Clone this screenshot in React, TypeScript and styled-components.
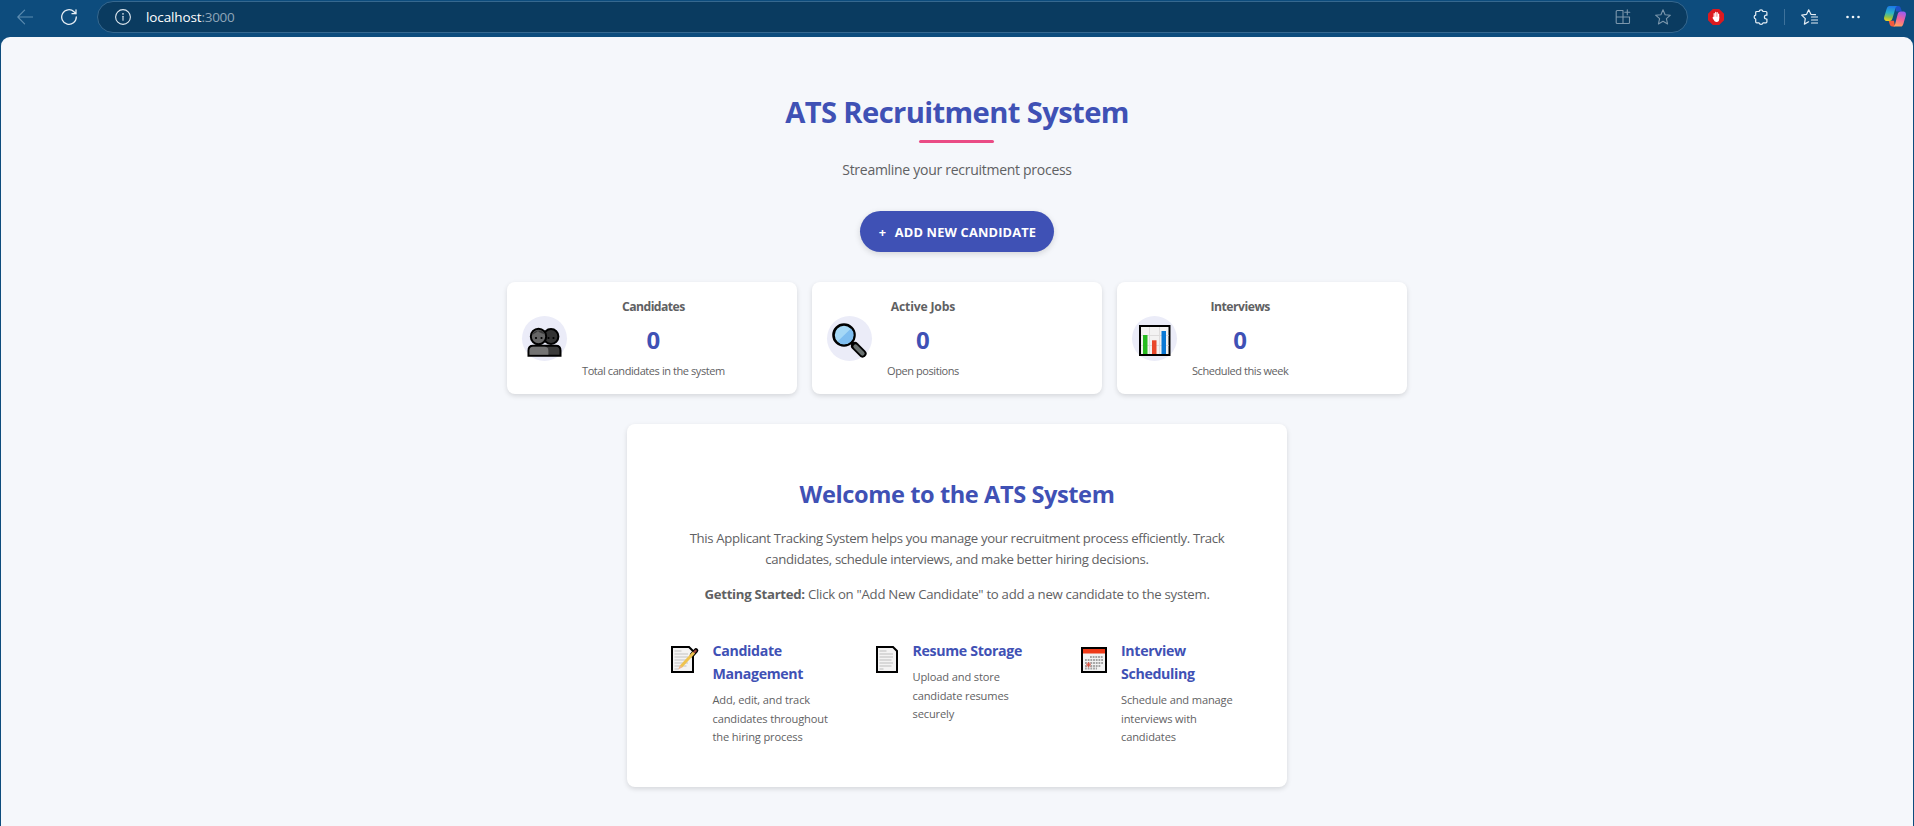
import React from 'react';
import styled, { createGlobalStyle } from 'styled-components';

const GlobalStyle = createGlobalStyle`
  * { box-sizing: border-box; }
  body {
    margin: 0;
    background: #0d4c7d;
    color: #5f6163;
    font-family: 'Open Sans', 'Noto Sans', sans-serif;
  }
  h1, h2, h3, h4, p { margin: 0; }
  svg { display: block; flex: none; }
`;

const Window = styled.div`
  display: flex;
  flex-direction: column;
  height: 826px;
  overflow: hidden;
`;

/* Browser toolbar */

const Toolbar = styled.header`
  display: flex;
  align-items: center;
  height: 37px;
  padding: 0 8px 4px 17px;
  flex: none;
`;

const ToolIcon = styled.span<{ $before?: number }>`
  display: flex;
  margin-left: ${(p) => p.$before ?? 0}px;
`;

const AddressBar = styled.div`
  display: flex;
  align-items: center;
  flex: 1;
  height: 32px;
  margin-left: 20px;
  padding: 0 16px 0 17px;
  border: 1px solid #36688f;
  border-radius: 16px;
  background: #0a3b60;
`;

const Url = styled.div`
  flex: 1;
  margin-left: 15px;
  font-size: 13.5px;
  line-height: 20px;
  letter-spacing: -0.12px;
  color: #fff;
`;

const Port = styled.span`
  color: #8ea5b8;
  letter-spacing: -0.3px;
`;

const Divider = styled.span`
  width: 1px;
  height: 16px;
  margin-left: 15px;
  background: #3e729b;
`;

/* Page */

const Page = styled.main`
  display: flex;
  flex-direction: column;
  align-items: center;
  flex: 1;
  margin: 0 1px;
  padding-top: 55px;
  border-radius: 9px 9px 0 0;
  background: #f5f7fb;
`;

const Title = styled.h1`
  display: flex;
  flex-direction: column;
  align-items: center;
  font-size: 29.2px;
  font-weight: 700;
  line-height: 40px;
  letter-spacing: -0.62px;
  color: #3f51b5;

  &::after {
    content: '';
    width: 75px;
    height: 3px;
    margin-top: 8px;
    border-radius: 2px;
    background: #ea4c85;
  }
`;

const Subtitle = styled.p`
  margin-top: 15px;
  font-size: 14px;
  line-height: 23px;
  letter-spacing: -0.28px;
`;

const AddButton = styled.button`
  display: flex;
  align-items: center;
  height: 41px;
  margin-top: 30px;
  padding: 0 18px 0 19px;
  border: 0;
  border-radius: 21px;
  background: #3f51b5;
  box-shadow: 0 2px 6px rgba(0, 0, 0, 0.14);
  color: #fff;
  font-family: inherit;
  font-size: 12.8px;
  font-weight: 700;
  letter-spacing: 0.18px;
  text-transform: uppercase;
`;

const Plus = styled.span`
  width: 16px;
  text-align: left;
`;

const Stats = styled.section`
  display: grid;
  grid-template-columns: repeat(3, 290px);
  gap: 15px;
  margin-top: 30px;
`;

const Card = styled.article`
  border-radius: 8px;
  background: #fff;
  box-shadow: 0 2px 5px rgba(0, 0, 0, 0.13);
`;

const StatCard = styled(Card)`
  display: flex;
  align-items: center;
  gap: 15px;
  height: 112px;
  padding: 15px;
`;

const StatIcon = styled.div`
  width: 45px;
  height: 45px;
  border-radius: 50%;
  background: #ebecf8;
`;

const StatBody = styled.div`
  text-align: center;
`;

const StatName = styled.h3<{ $tracking: number }>`
  font-size: 12.2px;
  font-weight: 700;
  line-height: 20px;
  letter-spacing: ${(p) => p.$tracking}px;
`;

const StatValue = styled.p`
  margin-top: 4px;
  font-size: 24px;
  font-weight: 700;
  line-height: 38px;
  color: #3f51b5;
`;

const StatNote = styled.p`
  margin-top: 3px;
  font-size: 11px;
  line-height: 17px;
  letter-spacing: -0.42px;
`;

const Welcome = styled(Card)`
  width: 660px;
  height: 363px;
  margin-top: 30px;
  padding: 52px 30px 0;
  text-align: center;
`;

const WelcomeTitle = styled.h2`
  font-size: 23.6px;
  font-weight: 700;
  line-height: 36px;
  letter-spacing: -0.42px;
  color: #3f51b5;
`;

const Paragraph = styled.p<{ $top: number; $tracking: number }>`
  margin: ${(p) => p.$top}px 30px 0;
  font-size: 13.2px;
  line-height: 21.5px;
  letter-spacing: ${(p) => p.$tracking}px;
`;

const Features = styled.div`
  display: grid;
  grid-template-columns: repeat(3, 190px);
  gap: 15px;
  margin-top: 33.5px;
  text-align: left;
`;

const Feature = styled.div`
  display: flex;
  padding: 0 13px;
`;

const FeatureIcon = styled.div<{ $width: number }>`
  width: ${(p) => p.$width}px;
  padding-top: 6px;
  flex: none;
`;

const FeatureTitle = styled.h4`
  font-size: 14.2px;
  font-weight: 700;
  line-height: 23px;
  letter-spacing: -0.34px;
  color: #3f51b5;
`;

const FeatureText = styled.p`
  margin-top: 6.5px;
  font-size: 11.1px;
  line-height: 18.5px;
  letter-spacing: -0.14px;
`;

const line = { fill: 'none', strokeLinecap: 'round', strokeLinejoin: 'round' } as const;

const BackIcon = () => (
  <svg width="16" height="16" viewBox="0 0 16 16" {...line} stroke="#5c8cb0" strokeWidth="1.1">
    <path d="M16 8H.8M7.6 1.2.8 8l6.8 6.8" />
  </svg>
);

const ReloadIcon = () => (
  <svg width="16" height="16" viewBox="0 0 16 16" {...line} stroke="#e6eef5" strokeWidth="1.3">
    <path d="M15.3 8A7.3 7.3 0 1 1 13 2.7l2 2M15 .8v3.9h-4" />
  </svg>
);

const InfoIcon = () => (
  <svg width="16" height="16" viewBox="0 0 16 16" {...line} stroke="#dfe8ef" strokeWidth="1.1">
    <circle cx="8" cy="8" r="7.4" />
    <path d="M8 7.3v4" />
    <circle cx="8" cy="4.8" r=".35" />
  </svg>
);

const AppsIcon = () => (
  <svg width="16" height="16" viewBox="0 0 16 16" {...line} stroke="#7c97ac" strokeWidth="1.1">
    <path d="M8 1.5H2.2a1 1 0 0 0-1 1v11a1 1 0 0 0 1 1h11.3a1 1 0 0 0 1-1V8H1.2M8 1.5v13M12.3.8v5M9.8 3.3h5" />
  </svg>
);

const StarIcon = () => (
  <svg width="16" height="16" viewBox="0 0 16 16" {...line} stroke="#7c97ac" strokeWidth="1.1">
    <path d="m8 .8 2.1 4.900 5.300.5-4 3.500 1.200 5.300L8 12.200 3.400 15l1.200-5.300-4-3.500 5.300-.5z" />
  </svg>
);

const BlockerIcon = () => (
  <svg width="16" height="16" viewBox="0 0 16 16">
    <path d="M4.800 0h6.400L16 4.800v6.400L11.200 16H4.800L0 11.200V4.800z" fill="#dc1a1f" />
    <path d="M6.200 4.500v4M7.700 3.400v5M9.200 3.700V9M10.600 5v4" stroke="#fff" strokeWidth="1.200" strokeLinecap="round" />
    <path d="M5.600 7.800h5.600v2.300c0 2-1 3-2.500 3-1.500 0-2.300-.8-2.900-2L4.400 8.800z" fill="#fff" />
  </svg>
);

const PuzzleIcon = () => (
  <svg width="16" height="16" viewBox="0 0 16 16" {...line} stroke="#e6eef5" strokeWidth="1.200">
    <path d="M3.700 2.500h2.400a2 2 0 0 1 3.900 0h2.900a1 1 0 0 1 1 1v2.700h-.6a1.900 1.900 0 0 0 0 3.800h.6v2.800a1 1 0 0 1-1 1H10a2 2 0 0 1-3.900 0H3.700a1 1 0 0 1-1-1V10a2 2 0 0 1 0-3.900V3.500a1 1 0 0 1 1-1z" />
  </svg>
);

const FavoritesIcon = () => (
  <svg width="17" height="16" viewBox="0 0 17 16" {...line} stroke="#e6eef5" strokeWidth="1.200">
    <path d="m14.500 5.700-4.600-.4L7.700.8 5.600 5.300.7 6.100l3.600 3.600-.9 5.400 4.200-2.300M10.500 8h6M10.500 11h6M10.500 14h6" />
  </svg>
);

const MoreIcon = () => (
  <svg width="16" height="16" viewBox="0 0 16 16" fill="#f1f6fa">
    <circle cx="2.500" cy="8" r="1.300" />
    <circle cx="8" cy="8" r="1.300" />
    <circle cx="13.500" cy="8" r="1.300" />
  </svg>
);

const CopilotIcon = () => (
  <svg width="22" height="21" viewBox="0 0 22 21">
    <defs>
      <linearGradient id="cool" x1=".4" y1="0" x2=".3" y2="1">
        <stop offset="0" stopColor="#1b78e8" />
        <stop offset=".45" stopColor="#2bb3c9" />
        <stop offset=".75" stopColor="#8bc34a" />
        <stop offset="1" stopColor="#f2cf1f" />
      </linearGradient>
      <linearGradient id="warm" x1=".7" y1="0" x2=".4" y2="1">
        <stop offset="0" stopColor="#9a5cf0" />
        <stop offset=".5" stopColor="#f0609c" />
        <stop offset="1" stopColor="#ffa05c" />
      </linearGradient>
    </defs>
    <path d="M11 0h3.400c1.400 0 2 .9 2.500 2.400l1 3.200H12z" fill="#1b50c8" />
    <path d="M11 20.500H8.200c-1.400 0-2.100-.9-2.500-2.200l-1-3.600H10z" fill="#f25a3c" />
    <path d="M5.500 0h7.800c-1.300.4-1.700 1.600-2.100 3L8.600 12c-.6 2-1.400 2.900-3.300 2.900H2.600c-2 0-3-1.500-2.400-3.800L2.600 3C3.200 1 4 0 5.500 0z" fill="url(#cool)" />
    <path d="M16.700 20.500H9.200c1.300-.4 1.700-1.600 2.100-3l2.300-9c.6-2 1.400-2.900 3.300-2.900h2.500c2 0 3 1.500 2.400 3.800l-2.300 8c-.5 2-1.300 3.100-2.800 3.100z" fill="url(#warm)" />
  </svg>
);

const PeopleIcon = () => (
  <svg width="45" height="45" viewBox="0 0 45 45" stroke="#000" strokeWidth="2">
    <circle cx="29" cy="20.500" r="7.400" fill="#333" />
    <circle cx="16.500" cy="20.500" r="7.700" fill="#666" />
    <path d="M9.700 20.500c1-3 4-3 6.300-5.500 2 2.500 5 2 7.300 3.500a7.200 7.200 0 0 0-13.600 2z" fill="#3a3a3a" stroke="none" />
    <path d="M6.500 39.800v-5.300c0-3.200 1.500-4.800 4.500-4.800h23c3 0 4.500 1.600 4.500 4.800v5.300z" fill="#3b3b3b" />
    <path d="M7.500 38.800v-4.300c0-2.600 1.200-3.800 3.500-3.800h11.500c2.700 0 3.900 1.200 3.900 3.800v4.300z" fill="#747474" stroke="none" />
    <g fill="#000" stroke="none">
      <circle cx="14" cy="22" r="1.100" />
      <circle cx="19.500" cy="22" r="1.100" />
      <circle cx="26.500" cy="22" r="1.100" />
      <circle cx="31.500" cy="22" r="1.100" />
    </g>
  </svg>
);

const SearchIcon = () => (
  <svg width="45" height="45" viewBox="0 0 45 45" strokeLinecap="round">
    <path d="m24 26 11.500 11.500" stroke="#000" strokeWidth="3.500" />
    <path d="m28 30 7.500 7.500" stroke="#000" strokeWidth="8" />
    <path d="m28.500 30.500 7 7" stroke="#68706f" strokeWidth="4.200" />
    <circle cx="17" cy="19" r="10.500" fill="#a5d8f6" stroke="#000" strokeWidth="2.600" />
    <path d="M24 12.500a9.300 9.300 0 0 1-13.500 13z" fill="#7fbef0" />
  </svg>
);

const ChartIcon = () => (
  <svg width="45" height="45" viewBox="0 0 45 45">
    <path d="M8 10h29.500v29H8z" fill="#f3f2f2" stroke="#000" strokeWidth="2" />
    <path d="M17.500 11v27M27.500 11v27M9 19.500h27.500M9 29.500h27.500" stroke="#dedcdc" />
    <path d="M11 19h4.500v19H11z" fill="#27bb20" />
    <path d="M20 24.300h4.500V38H20z" fill="#e9472a" />
    <path d="M29.500 15H34v23h-4.500z" fill="#0b78d4" />
  </svg>
);

const sheetLines = 'M4.500 6h7M4.500 9h13.500M4.500 12h13.500M4.500 15h12M4.500 18h13.500M4.500 21h12M4.500 24h4';

const NoteIcon = () => (
  <svg width="30" height="30" viewBox="0 0 30 30">
    <path d="M2 2h17l4 4v21H2z" fill="#f4f3f3" stroke="#000" strokeWidth="2" />
    <path d={sheetLines} stroke="#c3c3c3" />
    <path d="m22 10 4-4.500" stroke="#000" strokeWidth="4.600" strokeLinecap="round" />
    <path d="m11 21.500 13-14" stroke="#efc34f" strokeWidth="3" />
    <path d="m24.500 7 1.200-1.300" stroke="#a0473f" strokeWidth="2.200" strokeLinecap="round" />
    <path d="m8 24.500 2-4.200 2.300 2.200z" fill="#eeb98e" />
  </svg>
);

const DocumentIcon = () => (
  <svg width="26" height="30" viewBox="0 0 26 30">
    <path d="M2 2h16l4 4v21H2z" fill="#f4f3f3" stroke="#000" strokeWidth="2" />
    <path d={sheetLines} stroke="#bdbdbd" />
  </svg>
);

const CalendarIcon = () => (
  <svg width="30" height="30" viewBox="0 0 30 30">
    <path d="M2 3h24v24H2z" fill="#f2f2f2" />
    <path d="M2 3h24v5.500H2z" fill="#ee3a18" />
    <path d="M2 3h24v24H2z" fill="none" stroke="#000" strokeWidth="2" />
    <path d="M10 12h13M5 15h18M5 18h18M5 21h16M5 23.500h12" stroke="#a2a2a2" strokeWidth="1.800" strokeDasharray="1.800 .9" />
    <path d="m6.500 18 4 3.500M10.500 18l-4 3.500M8.500 17v5.500M6 19.700h5" stroke="#df4c3a" strokeWidth=".8" />
  </svg>
);

const stats = [
  { name: 'Candidates', tracking: -0.55, note: 'Total candidates in the system', icon: <PeopleIcon /> },
  { name: 'Active Jobs', tracking: -0.17, note: 'Open positions', icon: <SearchIcon /> },
  { name: 'Interviews', tracking: -0.5, note: 'Scheduled this week', icon: <ChartIcon /> },
];

const features = [
  { title: 'Candidate Management', text: 'Add, edit, and track candidates throughout the hiring process', icon: <NoteIcon />, width: 42.5 },
  { title: 'Resume Storage', text: 'Upload and store candidate resumes securely', icon: <DocumentIcon />, width: 37.5 },
  { title: 'Interview Scheduling', text: 'Schedule and manage interviews with candidates', icon: <CalendarIcon />, width: 41 },
];

export default function App() {
  return (
    <Window>
      <GlobalStyle />
      <Toolbar>
        <ToolIcon><BackIcon /></ToolIcon>
        <ToolIcon $before={28}><ReloadIcon /></ToolIcon>
        <AddressBar>
          <InfoIcon />
          <Url>localhost<Port>:3000</Port></Url>
          <ToolIcon><AppsIcon /></ToolIcon>
          <ToolIcon $before={24}><StarIcon /></ToolIcon>
        </AddressBar>
        <ToolIcon $before={20}><BlockerIcon /></ToolIcon>
        <ToolIcon $before={29}><PuzzleIcon /></ToolIcon>
        <Divider />
        <ToolIcon $before={16}><FavoritesIcon /></ToolIcon>
        <ToolIcon $before={27}><MoreIcon /></ToolIcon>
        <ToolIcon $before={23}><CopilotIcon /></ToolIcon>
      </Toolbar>
      <Page>
        <Title>ATS Recruitment System</Title>
        <Subtitle>Streamline your recruitment process</Subtitle>
        <AddButton><Plus>+</Plus>Add New Candidate</AddButton>
        <Stats>
          {stats.map((s) => (
            <StatCard key={s.name}>
              <StatIcon>{s.icon}</StatIcon>
              <StatBody>
                <StatName $tracking={s.tracking}>{s.name}</StatName>
                <StatValue>0</StatValue>
                <StatNote>{s.note}</StatNote>
              </StatBody>
            </StatCard>
          ))}
        </Stats>
        <Welcome>
          <WelcomeTitle>Welcome to the ATS System</WelcomeTitle>
          <Paragraph $top={15.5} $tracking={-0.35}>
            This Applicant Tracking System helps you manage your recruitment process efficiently. Track
            candidates, schedule interviews, and make better hiring decisions.
          </Paragraph>
          <Paragraph $top={13} $tracking={-0.28}>
            <strong>Getting Started:</strong> Click on "Add New Candidate" to add a new candidate to the system.
          </Paragraph>
          <Features>
            {features.map((f) => (
              <Feature key={f.title}>
                <FeatureIcon $width={f.width}>{f.icon}</FeatureIcon>
                <div>
                  <FeatureTitle>{f.title}</FeatureTitle>
                  <FeatureText>{f.text}</FeatureText>
                </div>
              </Feature>
            ))}
          </Features>
        </Welcome>
      </Page>
    </Window>
  );
}
